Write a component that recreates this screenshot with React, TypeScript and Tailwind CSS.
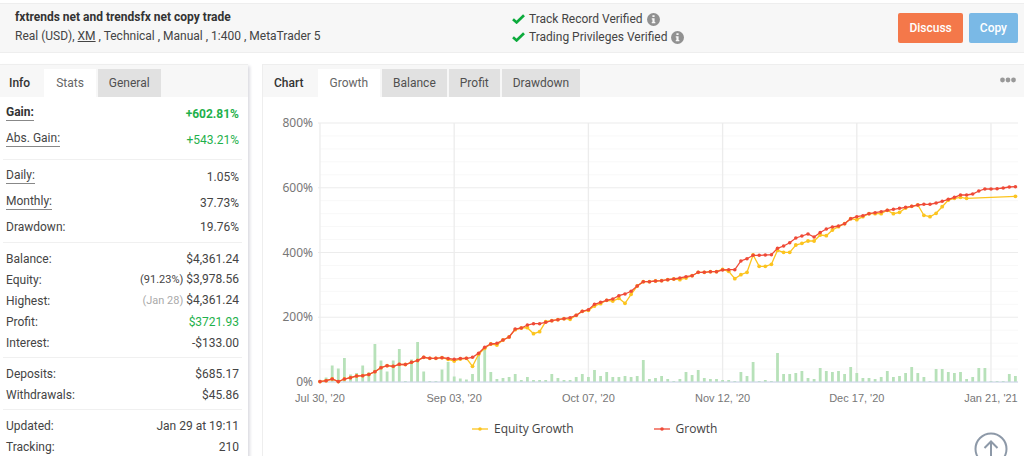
import { type ReactNode } from 'react';

interface StatRow {
    label: string;
    value: ReactNode;
    hint?: boolean;
    bold?: boolean;
    className?: string;
}

interface StatGroup {
    // groups whose labels carry hints are spaced wider
    loose?: boolean;
    rows: StatRow[];
}

const STAT_GROUPS: StatGroup[] = [
    {
        loose: true,
        rows: [
            { label: 'Gain:', value: '+602.81%', hint: true, bold: true, className: 'text-[#1fb14c]' },
            { label: 'Abs. Gain:', value: '+543.21%', hint: true, className: 'text-[#1fb14c]' },
        ],
    },
    {
        loose: true,
        rows: [
            { label: 'Daily:', value: '1.05%', hint: true },
            { label: 'Monthly:', value: '37.73%', hint: true },
            { label: 'Drawdown:', value: '19.76%' },
        ],
    },
    {
        rows: [
            { label: 'Balance:', value: '$4,361.24' },
            { label: 'Equity:', value: <><span className="text-[11px]">(91.23%)</span> $3,978.56</> },
            { label: 'Highest:', value: <><span className="text-[11px] text-[#aaaaaa]">(Jan 28)</span> $4,361.24</> },
            { label: 'Profit:', value: '$3721.93', className: 'text-[#1fb14c]' },
            { label: 'Interest:', value: '-$133.00' },
        ],
    },
    {
        rows: [
            { label: 'Deposits:', value: '$685.17' },
            { label: 'Withdrawals:', value: '$45.86' },
        ],
    },
    {
        rows: [
            { label: 'Updated:', value: 'Jan 29 at 19:11' },
            { label: 'Tracking:', value: '210' },
        ],
    },
];

// Heights above the 0% line, one entry per trading day
const GROWTH = [
    0.4, 1.3, 3, 0.4, 3, 4.3, 6, 6.3, 7.5, 10.3, 14.3, 16.3, 15.7, 17.7, 17.5, 19.7, 21.5, 24.7, 23.7, 23.7, 24.3, 23.5,
    22.7, 23.5, 23.7, 24.7, 28.7, 34.7, 38, 38.7, 42, 45, 53, 54, 57, 58.3, 58.3, 59.7, 61.3, 62.3, 63.3, 64.3, 66.7, 70.7,
    72.3, 77.7, 79.7, 81.7, 83, 86.3, 88, 90.7, 96, 100.3, 100.3, 101, 101.3, 102.3, 103, 104, 105.3, 106.3, 109.7, 109.7, 110.3, 110.3,
    112, 112.3, 112.3, 121, 123.3, 126.7, 126.7, 127, 127.3, 133.7, 136, 139.3, 144, 146, 148, 145, 149.5, 153, 155, 156, 158.3, 163.3,
    165.3, 166.3, 168.3, 169.3, 170.3, 171.7, 172.7, 173.7, 174.7, 175.7, 177, 177.7, 177.7, 179, 180.7, 182.7, 184.7, 187, 187, 188, 191, 193,
    193, 193.3, 194, 195, 195.3,
];

// Equity leaves the growth line only on these days
const EQUITY_DIPS: Record<number, number> = {
    21: 22.7, 22: 21, 23: 23, 25: 15.7, 26: 27.7, 27: 33.7, 29: 37, 32: 52.3, 34: 54.3, 35: 48.3, 36: 50.3, 37: 60.3,
    41: 62.7, 44: 71.7, 45: 76, 46: 78.3, 48: 81, 49: 83.7, 50: 78.7, 51: 87.7, 59: 102.3, 60: 104, 66: 112.7, 67: 110.7,
    68: 103.3, 69: 107.3, 70: 109.7, 71: 127, 72: 115.7, 73: 115.7, 74: 117.7, 75: 131.7, 76: 129.7, 77: 129.7, 78: 137,
    79: 138.7, 80: 141, 81: 141, 82: 147, 83: 146.3, 84: 152, 85: 155.3, 88: 162.3, 89: 165.3, 91: 168.3, 92: 168.3,
    94: 168.3, 95: 169.7, 96: 174, 99: 166.7, 100: 165.3, 101: 168.7, 102: 175.3, 103: 182, 104: 183.7, 105: 184.7,
    106: 183.7, 114: 185.7,
};

const BARS = [
    2, 4.5, 16.5, 13.5, 24, 7.5, 9, 16.5, 9.5, 38, 21.5, 10.5, 21.5, 33, 1, 22.5, 40, 10.5, 1, 1, 12.5, 20,
    5.5, 3.5, 2.5, 8, 28, 33, 10, 3, 4, 5, 8, 2, 5, 2, 2, 2, 8, 4, 2, 2, 5, 8,
    5, 12, 6, 10, 5, 5, 6, 5, 6, 22, 3, 4, 6, 3, 1, 3, 10, 7, 12, 4, 3, 3,
    2, 2, 1, 10, 6, 20, 1, 2, 1, 29, 8, 8, 9, 11, 4, 3, 14, 11, 10, 11, 8, 15,
    9, 4, 4, 3, 5, 11, 5, 6, 9, 15, 9, 5, 1, 13, 13, 10, 9, 10, 3, 5, 14, 14,
    1, 1, 1, 8, 6,
];

const X_LABELS = ["Jul 30, '20", "Sep 03, '20", "Oct 07, '20", "Nov 12, '20", "Dec 17, '20", "Jan 21, '21"];
const Y_LABELS = ['0%', '200%', '400%', '600%', '800%'];

const LEFT = 57;
const BASE = 285;
const STEP = 6.1;
const ROW = 64.75;

const dayX = (day: number) => LEFT + day * STEP;

const growthPoints = GROWTH.map((h, day) => ({ x: dayX(day), y: BASE - h }));
const equityPoints = GROWTH.map((h, day) => ({ x: dayX(day), y: BASE - (EQUITY_DIPS[day] ?? h) })).filter(
    (_, day) => day <= 106 || day === 114,
);

function Series({ points, color, r }: { points: { x: number; y: number }[]; color: string; r: number }) {
    return (
        <g fill={color}>
            <polyline points={points.map((p) => `${p.x},${p.y}`).join(' ')} fill="none" stroke={color} strokeWidth={1.3} />
            {points.map((p) => (
                <circle key={p.x} cx={p.x} cy={p.y} r={r} />
            ))}
        </g>
    );
}

function GrowthChart() {
    return (
        <svg viewBox="0 0 761 315" className="block w-full" role="img" aria-label="Growth chart">
            {Array.from({ length: 21 }, (_, i) => (
                <line
                    key={i}
                    x1={i % 5 ? LEFT : LEFT - 2}
                    x2={755}
                    y1={BASE - (i * ROW) / 5}
                    y2={BASE - (i * ROW) / 5}
                    stroke={i % 5 ? '#f8f8f8' : '#ececec'}
                    strokeWidth={i % 5 ? 1 : 1.2}
                />
            ))}
            {X_LABELS.map((label, i) => (
                <g key={label}>
                    <line x1={dayX(i * 22)} x2={dayX(i * 22)} y1={BASE - 4 * ROW} y2={BASE} stroke="#ececec" strokeWidth={1.3} />
                    <text x={dayX(i * 22)} y={305} textAnchor="middle" fontSize={11} fill="#777777" className="font-['Liberation_Sans',sans-serif]">
                        {label}
                    </text>
                </g>
            ))}
            {Y_LABELS.map((label, i) => (
                <text key={label} x={50} y={BASE - i * ROW + 4} textAnchor="end" fontSize={12} fill="#777777" className="font-['Noto_Sans',sans-serif]">
                    {label}
                </text>
            ))}
            {BARS.map((h, day) => (
                <rect key={day} x={dayX(day) - 1.4} y={BASE - h} width={2.8} height={h} fill="#b7e1b9" />
            ))}
            <line x1={LEFT} x2={755} y1={BASE} y2={BASE} stroke="#ccd6eb" />
            <Series points={equityPoints} color="#fcc41f" r={1.9} />
            <Series points={growthPoints} color="#ef4a37" r={1.8} />
        </svg>
    );
}

function LegendItem({ label, color }: { label: string; color: string }) {
    return (
        <span className="flex items-center gap-1.5">
            <svg width="16" height="6" viewBox="0 0 16 6" aria-hidden="true">
                <path d="M0 3h16" stroke={color} strokeWidth="1.3" />
                <circle cx="8" cy="3" r="1.8" fill={color} />
            </svg>
            {label}
        </span>
    );
}

function Verified({ children }: { children: ReactNode }) {
    return (
        <p className="flex items-center gap-1">
            <svg width="13" height="10" viewBox="0 0 13 10" aria-hidden="true">
                <path d="M1 5.2 4.6 8.4 12 1.2" fill="none" stroke="#0cab3c" strokeWidth="2.7" />
            </svg>
            {children}
            <svg width="13" height="13" viewBox="0 0 12 12" aria-hidden="true">
                <circle cx="6" cy="6" r="6" fill="#919191" />
                <path d="M5 2h2v1.7H5zM4.4 4.8H7v3.5h.7v1.2H4.4V8.3H5V6h-.6z" fill="#f7f7f7" />
            </svg>
        </p>
    );
}

function TabBar({ title, tabs, children }: { title: string; tabs: string[]; children?: ReactNode }) {
    return (
        <div className="flex items-end border-t border-[#eeeeee] bg-[#f7f7f7] pt-1">
            <h2 className="flex h-7 items-center font-medium text-[#333333]">{title}</h2>
            <div className="ml-[14px] flex gap-0.5" role="tablist">
                {tabs.map((tab, i) => (
                    <button
                        key={tab}
                        role="tab"
                        aria-selected={i === 0}
                        className={i === 0 ? 'h-7 bg-white px-3 text-[#666666]' : 'h-7 bg-[#e1e1e1] px-[11px] text-[#505050]'}
                    >
                        {tab}
                    </button>
                ))}
            </div>
            {children}
        </div>
    );
}

export default function App() {
    return (
        <div className="flex min-h-screen flex-col overflow-hidden bg-white font-['Roboto',sans-serif] text-xs leading-[18px] text-[#444444]">
            <header className="mt-[3px] flex items-center border-y border-[#eeeeee] bg-[#f7f7f7] py-1 shadow-[0_-3px_0_#fff,0_-4px_0_#eee]">
                <div className="flex h-10 w-1/2 flex-col gap-px pl-[15px]">
                    <h1 className="font-bold text-[#333333]">fxtrends net and trendsfx net copy trade</h1>
                    <p>
                        Real (USD), <a href="#xm" className="underline">XM</a> , Technical , Manual , 1:400 , MetaTrader 5
                    </p>
                </div>
                <div className="flex-1">
                    <Verified>Track Record Verified</Verified>
                    <Verified>Trading Privileges Verified</Verified>
                </div>
                <div className="mr-[6px] flex gap-1.5 text-white">
                    <button className="h-[30px] rounded-[2px] bg-[#f4784a] px-[11px] font-medium">Discuss</button>
                    <button className="h-[30px] rounded-[2px] bg-[#7ab9e6] px-[11px] font-medium">Copy</button>
                </div>
            </header>

            <main className="mt-[11px] flex flex-1 gap-[14px]">
                <aside className="w-[248px] shrink-0 shadow-[2px_2px_3px_#dcdce2]">
                    <div className="[&>div]:pl-[9px]">
                        <TabBar title="Info" tabs={['Stats', 'General']} />
                    </div>
                    <div className="pr-[6px] pl-[3px]">
                        {STAT_GROUPS.map((group, i) => (
                            <dl
                                key={i}
                                className={
                                    group.loose
                                        ? 'border-b border-[#f0f0f0] px-[3px] pt-[6px] pb-1 last:border-0'
                                        : 'border-b border-[#f0f0f0] px-[3px] pt-[5px] pb-1 last:border-0'
                                }
                            >
                                {group.rows.map((row) => (
                                    <div
                                        key={row.label}
                                        className={
                                            !group.loose
                                                ? 'flex h-[21px] items-center justify-between'
                                                : row.hint
                                                  ? 'flex h-[26px] justify-between'
                                                  : 'flex h-5 justify-between'
                                        }
                                    >
                                        <dt className={row.bold ? 'font-bold text-[#333333]' : ''}>
                                            <span className={row.hint ? 'inline-block border-b border-[#888888] leading-[16px]' : ''}>{row.label}</span>
                                        </dt>
                                        <dd className={`${row.className ?? ''} ${row.bold ? 'font-bold' : ''} ${row.hint ? 'pt-[2px]' : ''}`}>
                                            {row.value}
                                        </dd>
                                    </div>
                                ))}
                            </dl>
                        ))}
                    </div>
                </aside>

                <section className="min-w-0 flex-1 border-l border-[#eeeeee]">
                    <div className="[&>div]:pl-[11px]">
                        <TabBar title="Chart" tabs={['Growth', 'Balance', 'Profit', 'Drawdown']}>
                            <button aria-label="More options" className="mr-2 ml-auto flex h-5 self-start pt-2">
                                <svg width="16" height="6" viewBox="0 0 16 6" fill="#999999">
                                    <circle cx="2.5" cy="3" r="2.4" />
                                    <circle cx="8" cy="3" r="2.4" />
                                    <circle cx="13.5" cy="3" r="2.4" />
                                </svg>
                            </button>
                        </TabBar>
                    </div>
                    <GrowthChart />
                    <div className="flex gap-20 pt-2 pl-[209px] font-['Open_Sans',sans-serif] text-xs leading-[18px]">
                        <LegendItem label="Equity Growth" color="#fcc41f" />
                        <LegendItem label="Growth" color="#ef4a37" />
                    </div>
                </section>
            </main>

            <button aria-label="Back to top" className="fixed right-4 -bottom-2.5">
                <svg width="34" height="34" viewBox="0 0 34 34" fill="none" stroke="#8d99a8" strokeWidth="2">
                    <circle cx="17" cy="17" r="15.5" fill="#ffffff" />
                    <path d="M17 26V10M10.500 16 17 9.500l6.500 6.500" />
                </svg>
            </button>
        </div>
    );
}
